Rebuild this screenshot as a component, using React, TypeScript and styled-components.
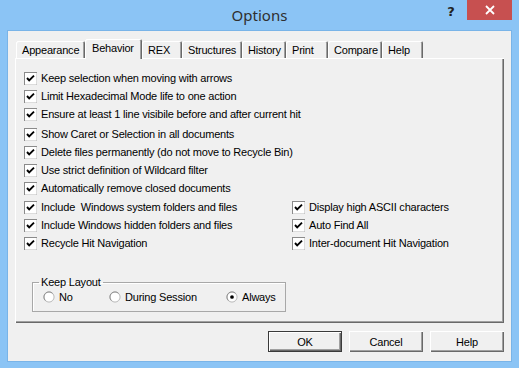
import React from 'react';
import styled, { createGlobalStyle } from 'styled-components';

const GlobalStyle = createGlobalStyle`
  html, body {
    margin: 0;
    padding: 0;
    background: #8bc4f5;
  }
  body {
    font-family: "Liberation Sans", Arial, sans-serif;
    font-size: 11px;
    letter-spacing: -0.2px;
    color: #000;
  }
`;

const Window = styled.div`
  width: 519px;
  height: 368px;
  box-sizing: border-box;
  background: #8bc4f5;
  display: flex;
  flex-direction: column;
  padding: 0 8px 7px 8px;
`;

const TitleBar = styled.div`
  height: 31px;
  flex: none;
  display: grid;
  grid-template-columns: 1fr auto 1fr;
  align-items: center;
`;

const Title = styled.div`
  grid-column: 2;
  font-family: "Noto Sans", "Open Sans", sans-serif;
  font-size: 15px;
  letter-spacing: 0;
  color: #2f2f2f;
  margin-top: -1px;
`;

const Controls = styled.div`
  grid-column: 3;
  align-self: start;
  justify-self: end;
  display: flex;
  align-items: flex-start;
  margin-right: -1px;
`;

const HelpGlyph = styled.div`
  width: 12px;
  margin-right: 10px;
  padding-top: 4px;
  font-family: "DejaVu Sans", sans-serif;
  font-weight: bold;
  font-size: 13px;
  color: #222;
  text-align: center;
`;

const CloseButton = styled.div`
  width: 45px;
  height: 20px;
  background: #c75050;
  display: flex;
  align-items: center;
  justify-content: center;
`;

const Client = styled.div`
  flex: 1;
  background: #f0f0f0;
  box-shadow: 0 0 0 1px #79b4e8;
  display: flex;
  flex-direction: column;
  padding: 8px 7px 0 7px;
`;

const TabStrip = styled.div`
  display: flex;
  align-items: flex-end;
  height: 19px;
  padding-left: 1px;
  position: relative;
  z-index: 1;
`;

const Tab = styled.div<{ $w: number; $active?: boolean }>`
  width: ${p => p.$w}px;
  height: ${p => (p.$active ? 20 : 17)}px;
  margin-bottom: ${p => (p.$active ? -1 : 0)}px;
  box-sizing: border-box;
  padding-left: ${p => (p.$active ? 7 : 6)}px;
  padding-top: 2px;
  background: #f0f0f0;
  border-radius: 2px 2px 0 0;
  box-shadow: inset 1px 1px #ffffff, inset -1px 0 #696969, inset -2px 0 #a0a0a0;
  font-size: 11px;
  line-height: 14px;
  white-space: nowrap;
`;

const Panel = styled.div`
  width: 489px;
  height: 265px;
  box-sizing: border-box;
  background: #f0f0f0;
  box-shadow: inset 1px 1px #ffffff, inset -1px -1px #696969, inset -2px -2px #a0a0a0;
  display: flex;
  flex-direction: column;
  padding: 11px 8px 0 9px;
`;

const Group = styled.div<{ $top?: number }>`
  display: flex;
  flex-direction: column;
  margin-top: ${p => p.$top ?? 0}px;
`;

const Columns = styled.div`
  display: grid;
  grid-template-columns: 268px 1fr;
  margin-top: 1px;
`;

const Row = styled.label`
  display: flex;
  align-items: center;
  gap: 4px;
  height: 18px;
  white-space: pre;
`;

const Box = styled.svg`
  flex: none;
  width: 13px;
  height: 13px;
`;

const GroupBox = styled.fieldset`
  width: 254px;
  box-sizing: border-box;
  margin: 24px 0 0 8px;
  padding: 1px 8px 7px 10px;
  border: 1px solid #a8a8a8;
  box-shadow: inset 1px 1px #ffffff;
`;

const Legend = styled.legend`
  padding: 0 2px;
  margin-left: -4px;
  line-height: 13px;
`;

const RadioRow = styled.div`
  display: flex;
  align-items: center;
  height: 14px;
`;

const RadioItem = styled.div<{ $w?: number }>`
  display: flex;
  align-items: center;
  gap: 4px;
  width: ${p => (p.$w ? `${p.$w}px` : 'auto')};
`;

const ButtonRow = styled.div`
  display: flex;
  justify-content: flex-end;
  gap: 7px;
  margin-top: 8px;
`;

const Button = styled.div<{ $default?: boolean }>`
  width: 74px;
  height: 21px;
  box-sizing: border-box;
  display: flex;
  align-items: center;
  justify-content: center;
  background: #f0f0f0;
  box-shadow: ${p =>
    p.$default
      ? 'inset 0 0 0 1px #3a3a3a, inset 1px 1px #ffffff, inset 2px 2px #ffffff, inset -2px -2px #696969, inset -3px -3px #a0a0a0'
      : 'inset 1px 1px #ffffff, inset -1px -1px #696969, inset -2px -2px #a0a0a0'};
`;

function CheckBox() {
  return (
    <Box viewBox="0 0 13 13">
      <rect x="0.5" y="0.5" width="12" height="12" fill="#fff" stroke="#8a8a8a" />
      <path d="M1 12.5 H12.5 V1" fill="none" stroke="#dcdcdc" />
      <polyline points="3,6 5.2,8.4 10,3.6" fill="none" stroke="#000" strokeWidth="1.9" />
    </Box>
  );
}

function Radio({ on }: { on?: boolean }) {
  return (
    <Box viewBox="0 0 13 13" style={{ width: 12, height: 12 }}>
      <circle cx="6.5" cy="6.5" r="5.5" fill="#fff" stroke="#b4b4b4" />
      <path d="M2.6 10.4 A5.5 5.5 0 0 1 10.4 2.6" fill="none" stroke="#8c8c8c" />
      {on && <circle cx="6.5" cy="6.5" r="2" fill="#000" />}
    </Box>
  );
}

function Check({ children }: { children: React.ReactNode }) {
  return (
    <Row>
      <CheckBox />
      <span>{children}</span>
    </Row>
  );
}

const tabs: [string, number][] = [
  ['Appearance', 69],
  ['Behavior', 57],
  ['REX', 40],
  ['Structures', 60],
  ['History', 44],
  ['Print', 42],
  ['Compare', 54],
  ['Help', 41],
];

export default function App() {
  return (
    <>
      <GlobalStyle />
      <Window>
        <TitleBar>
          <Title>Options</Title>
          <Controls>
            <HelpGlyph>?</HelpGlyph>
            <CloseButton>
              <svg width="10" height="10" viewBox="0 0 10 10">
                <path d="M1 1 L9 9 M9 1 L1 9" stroke="#fff" strokeWidth="1.8" />
              </svg>
            </CloseButton>
          </Controls>
        </TitleBar>
        <Client>
          <TabStrip>
            {tabs.map(([name, w]) => (
              <Tab key={name} $w={w} $active={name === 'Behavior'}>
                {name}
              </Tab>
            ))}
          </TabStrip>
          <Panel>
            <Group>
              <Check>Keep selection when moving with arrows</Check>
              <Check>Limit Hexadecimal Mode life to one action</Check>
              <Check>Ensure at least 1 line visibile before and after current hit</Check>
            </Group>
            <Group $top={2}>
              <Check>Show Caret or Selection in all documents</Check>
              <Check>Delete files permanently (do not move to Recycle Bin)</Check>
              <Check>Use strict definition of Wildcard filter</Check>
              <Check>Automatically remove closed documents</Check>
            </Group>
            <Columns>
              <Group>
                <Check>Include  Windows system folders and files</Check>
                <Check>Include Windows hidden folders and files</Check>
                <Check>Recycle Hit Navigation</Check>
              </Group>
              <Group>
                <Check>Display high ASCII characters</Check>
                <Check>Auto Find All</Check>
                <Check>Inter-document Hit Navigation</Check>
              </Group>
            </Columns>
            <GroupBox>
              <Legend>Keep Layout</Legend>
              <RadioRow>
                <RadioItem $w={66}>
                  <Radio />
                  <span>No</span>
                </RadioItem>
                <RadioItem $w={117}>
                  <Radio />
                  <span>During Session</span>
                </RadioItem>
                <RadioItem>
                  <Radio on />
                  <span>Always</span>
                </RadioItem>
              </RadioRow>
            </GroupBox>
          </Panel>
          <ButtonRow>
            <Button $default>OK</Button>
            <Button>Cancel</Button>
            <Button>Help</Button>
          </ButtonRow>
        </Client>
      </Window>
    </>
  );
}
